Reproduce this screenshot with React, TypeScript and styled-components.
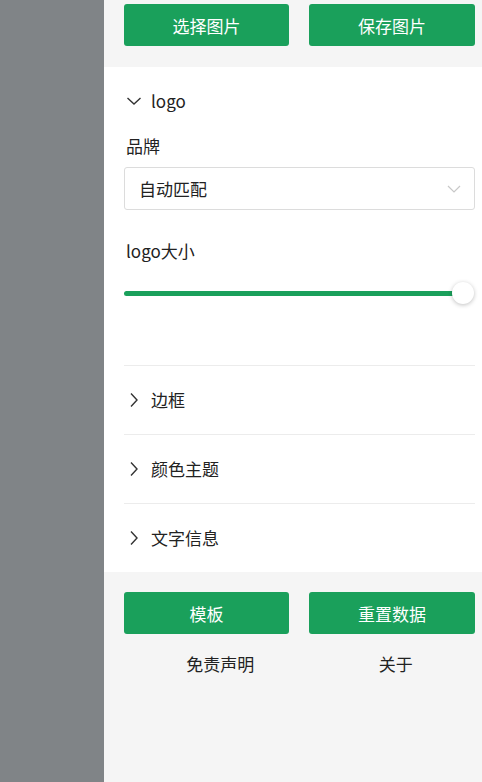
import React from "react";
import styled, { createGlobalStyle } from "styled-components";

const GlobalStyle = createGlobalStyle`
  html, body {
    margin: 0;
    padding: 0;
    height: 100%;
  }
  body {
    font-family: "Noto Sans CJK SC", "Noto Sans", sans-serif;
    color: #222;
  }
  #root {
    height: 100%;
  }
`;

const collapsed = ["边框", "颜色主题", "文字信息"];

const Chevron = ({ open }: { open?: boolean }) => (
  <ChevronBox>
    <svg width="16" height="16" viewBox="0 0 16 16" fill="none">
      {open ? (
        <path d="M1.5 5 L8 11 L14.5 5" stroke="#333" strokeWidth="1.4" />
      ) : (
        <path d="M5 1.5 L11 8 L5 14.5" stroke="#333" strokeWidth="1.4" />
      )}
    </svg>
  </ChevronBox>
);

const App = () => {
  return (
    <Page>
      <GlobalStyle />
      <Side />
      <Panel>
        <ButtonRow>
          <GreenButton>选择图片</GreenButton>
          <GreenButton>保存图片</GreenButton>
        </ButtonRow>
        <Card>
          <Header>
            <Chevron open />
            <HeaderText>logo</HeaderText>
          </Header>
          <Body>
            <Label>品牌</Label>
            <Select>
              <span>自动匹配</span>
              <svg width="14" height="8" viewBox="0 0 14 8" fill="none">
                <path d="M1 1 L7 7 L13 1" stroke="#c8c8c8" strokeWidth="1.2" />
              </svg>
            </Select>
            <Label $top={30}>logo大小</Label>
            <Slider>
              <Track />
              <Thumb />
            </Slider>
          </Body>
          {collapsed.map((t) => (
            <Row key={t}>
              <Chevron />
              <HeaderText>{t}</HeaderText>
            </Row>
          ))}
        </Card>
        <ButtonRow $top={20}>
          <GreenButton>模板</GreenButton>
          <GreenButton>重置数据</GreenButton>
        </ButtonRow>
        <Links>
          <LinkText>免责声明</LinkText>
          <LinkText>关于</LinkText>
        </Links>
      </Panel>
    </Page>
  );
};

export default App;

const Page = styled.div`
  display: flex;
  width: 482px;
  height: 782px;
  overflow: hidden;
`;

const Side = styled.div`
  width: 104px;
  flex-shrink: 0;
  background: #808487;
`;

const Panel = styled.div`
  flex: 1;
  background: #f5f5f5;
  padding-top: 4px;
  display: flex;
  flex-direction: column;
`;

const ButtonRow = styled.div<{ $top?: number }>`
  display: grid;
  grid-template-columns: 165px 166px;
  column-gap: 20px;
  padding: 0 7px 0 20px;
  margin-top: ${(p) => p.$top ?? 0}px;
`;

const GreenButton = styled.div`
  height: 42px;
  border-radius: 3px;
  background: #1aa05b;
  color: #fff;
  font-size: 17px;
  display: flex;
  align-items: center;
  justify-content: center;
`;

const Card = styled.div`
  margin-top: 21px;
  background: #fff;
  padding: 0 7px 0 20px;
`;

const Header = styled.div`
  height: 68px;
  display: flex;
  align-items: center;
`;

const ChevronBox = styled.div`
  width: 20px;
  height: 16px;
  display: flex;
  align-items: center;
  justify-content: center;
  margin-right: 7px;
`;

const HeaderText = styled.div`
  font-size: 17px;
  line-height: 22px;
  color: #222;
`;

const Body = styled.div`
  padding-bottom: 61px;
`;

const Label = styled.div<{ $top?: number }>`
  font-size: 17px;
  line-height: 22px;
  margin-top: ${(p) => p.$top ?? 0}px;
  margin-left: 2px;
  color: #222;
`;

const Select = styled.div`
  margin-top: 10px;
  height: 43px;
  box-sizing: border-box;
  border: 1px solid #dcdcdc;
  border-radius: 3px;
  display: flex;
  align-items: center;
  justify-content: space-between;
  padding: 0 13px 0 14px;
  font-size: 17px;
  color: #222;
`;

const Slider = styled.div`
  position: relative;
  margin-top: 20px;
  height: 22px;
  display: flex;
  align-items: center;
`;

const Track = styled.div`
  width: 340px;
  height: 5px;
  border-radius: 3px;
  background: #1aa05b;
`;

const Thumb = styled.div`
  position: absolute;
  left: 328px;
  top: 0;
  width: 22px;
  height: 22px;
  border-radius: 50%;
  background: #fff;
  box-shadow: 0 1px 4px rgba(0, 0, 0, 0.25);
`;

const Row = styled.div`
  height: 68px;
  border-top: 1px solid #ececec;
  display: flex;
  align-items: center;
`;

const Links = styled.div`
  display: flex;
  justify-content: space-around;
  padding: 0 7px 0 20px;
  margin-top: 19px;
`;

const LinkText = styled.div`
  font-size: 17px;
  line-height: 22px;
  color: #222;
`;
